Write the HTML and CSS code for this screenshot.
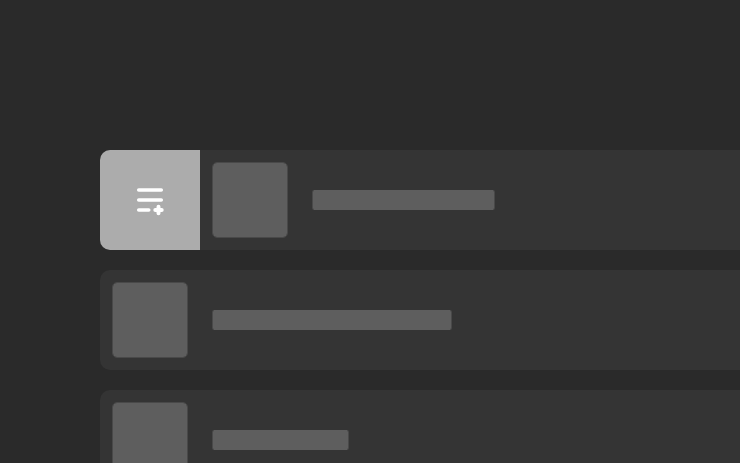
FILE: index.html
```html
<!DOCTYPE html>
<html lang="en">
<head>
<meta charset="utf-8">
<title>Playlist loading</title>
<link rel="stylesheet" href="styles.css">
</head>
<body>
<main class="list">
  <div class="row">
    <div class="action">
      <svg class="action-icon" viewBox="0 0 32 32" width="32" height="32" aria-hidden="true">
        <path d="M4.7 6H27.3M4.7 16H27.3M4.7 26H14.8" fill="none" stroke="#fff" stroke-width="3.5" stroke-linecap="round"/>
        <path d="M21.3 26H27.7M24.5 22.8V29.2" fill="none" stroke="#fff" stroke-width="4" stroke-linecap="round"/>
      </svg>
    </div>
    <div class="content">
      <div class="thumb"></div>
      <div class="bar bar-short"></div>
    </div>
  </div>
  <div class="row">
    <div class="content">
      <div class="thumb"></div>
      <div class="bar bar-long"></div>
    </div>
  </div>
  <div class="row">
    <div class="content">
      <div class="thumb"></div>
      <div class="bar bar-tiny"></div>
    </div>
  </div>
</main>
</body>
</html>
```
FILE: styles.css
```css
html, body {
  margin: 0;
  height: 100%;
  overflow: hidden;
  background: #2a2a2a;
}
.list {
  display: flex;
  flex-direction: column;
  gap: 20px;
  width: 900px;
  padding: 150px 0 0 100px;
}
.row {
  display: flex;
  flex: none;
  height: 100px;
  border-radius: 10px;
  overflow: hidden;
  background: #343434;
}
.action {
  flex: none;
  width: 100px;
  display: flex;
  align-items: center;
  justify-content: center;
  background: #acacac;
}
.action-icon {
  display: block;
}
.content {
  flex: 1;
  display: flex;
  align-items: center;
  gap: 24px;
  padding: 0 12px;
}
.thumb {
  flex: none;
  box-sizing: border-box;
  width: 76px;
  height: 76px;
  border: 1px solid #494949;
  border-radius: 5px;
  background: #5e5e5e;
  background-clip: padding-box;
}
.bar {
  box-sizing: border-box;
  height: 20px;
  border: solid #494949;
  border-width: 0 1px;
  border-radius: 2px;
  background: #5e5e5e;
  background-clip: padding-box;
}
.bar-short { width: 183px; }
.bar-long { width: 240px; }
.bar-tiny { width: 137px; }
```
